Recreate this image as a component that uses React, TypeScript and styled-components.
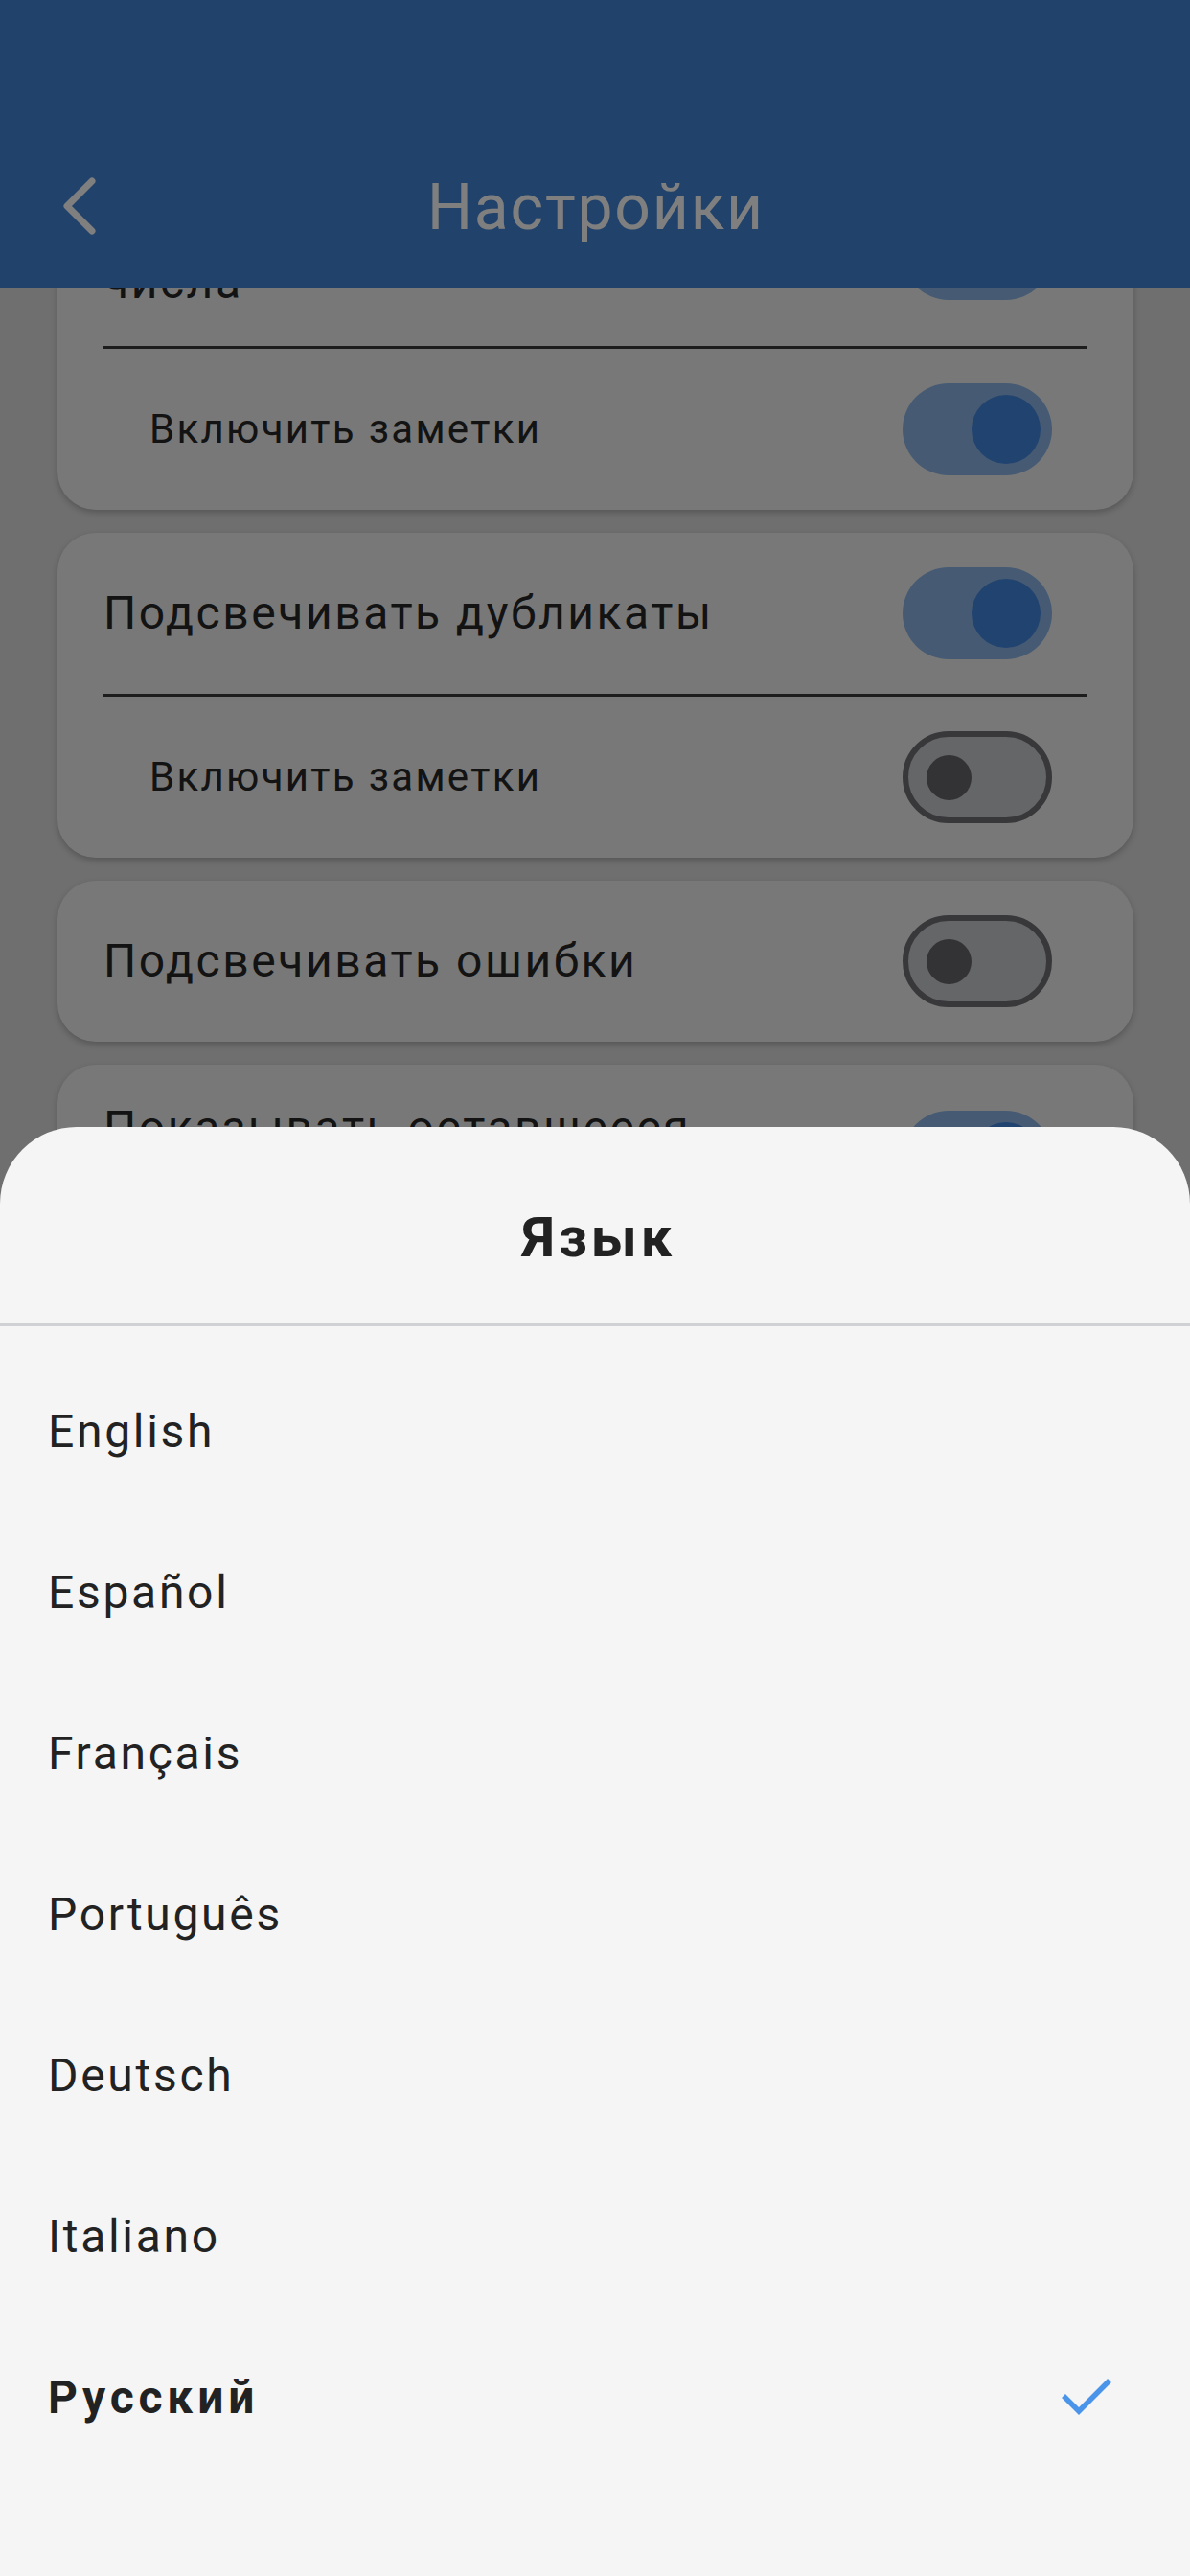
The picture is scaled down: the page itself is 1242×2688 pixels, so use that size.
import React from 'react';
import styled, { createGlobalStyle } from 'styled-components';

const GlobalStyle = createGlobalStyle`
  html, body {
    margin: 0;
    padding: 0;
    background: #dedede;
  }

  body {
    font-family: Roboto, 'Noto Sans', 'Liberation Sans', sans-serif;
    -webkit-font-smoothing: antialiased;
  }
`;

const Screen = styled.div`
  position: relative;
  width: 1242px;
  height: 2688px;
  overflow: hidden;
  background: #dedede;
  display: flex;
  flex-direction: column;
`;

const Header = styled.header`
  position: relative;
  z-index: 1;
  flex: 0 0 300px;
  box-sizing: border-box;
  padding-top: 150px;
  background: #4284d4;
`;

const Bar = styled.div`
  height: 132px;
  display: grid;
  grid-template-columns: 1fr auto 1fr;
  align-items: center;
`;

const BackButton = styled.button`
  justify-self: start;
  margin-left: 62px;
  padding: 0;
  border: none;
  background: none;
  display: flex;
  align-items: center;
`;

const Title = styled.h1`
  margin: 0;
  padding-left: 2px;
  font-size: 66px;
  font-weight: 400;
  color: #ffffff;
  letter-spacing: 1.8px;
`;

const Scroller = styled.main`
  flex: 1;
  overflow: hidden;
`;

const SettingsList = styled.div`
  display: flex;
  flex-direction: column;
  gap: 24px;
  padding: 0 59px 0 60px;
`;

const Card = styled.section`
  border-radius: 40px;
  background: #f0f0f0;
  padding: 0 49px 0 48px;
  box-shadow: 0 3px 6px rgba(0, 0, 0, 0.22);
`;

const Row = styled.div<{ $indent?: boolean }>`
  display: flex;
  align-items: center;
  justify-content: space-between;
  gap: 24px;
  min-height: 96px;
  padding: 36px 36px 36px ${(p) => (p.$indent ? '48px' : '0')};
`;

const Label = styled.span<{ $small?: boolean }>`
  font-size: ${(p) => (p.$small ? '42px' : '48px')};
  letter-spacing: ${(p) => (p.$small ? '2.3px' : '2.55px')};
  line-height: 60px;
  color: #262626;
  white-space: pre-line;
`;

const Divider = styled.div`
  height: 3px;
  background: #3a3a3a;
`;

const Track = styled.div<{ $on: boolean }>`
  flex: 0 0 auto;
  box-sizing: border-box;
  width: 156px;
  height: 96px;
  border-radius: 48px;
  display: flex;
  align-items: center;
  background: ${(p) => (p.$on ? '#8cb6e6' : '#cacccf')};
  border: ${(p) => (p.$on ? 'none' : '6px solid #707076')};
  justify-content: ${(p) => (p.$on ? 'flex-end' : 'flex-start')};
  padding: ${(p) => (p.$on ? '0 12px' : '0 18.5px')};
`;

const Thumb = styled.div<{ $on: boolean }>`
  width: ${(p) => (p.$on ? '72px' : '47px')};
  height: ${(p) => (p.$on ? '72px' : '47px')};
  border-radius: 50%;
  background: ${(p) => (p.$on ? '#4286e0' : '#66666c')};
`;

const Scrim = styled.div`
  position: absolute;
  inset: 0;
  z-index: 2;
  background: rgba(0, 0, 0, 0.5);
`;

const Sheet = styled.div`
  position: absolute;
  z-index: 3;
  left: 0;
  right: 0;
  bottom: 0;
  top: 1176px;
  background: #f5f5f5;
  border-radius: 80px 80px 0 0;
  display: flex;
  flex-direction: column;
`;

const SheetHeader = styled.div`
  height: 208px;
  box-sizing: border-box;
  padding-top: 24px;
  display: flex;
  align-items: center;
  justify-content: center;
  border-bottom: 3px solid #d0d1d5;
`;

const SheetTitle = styled.h2`
  margin: 0;
  padding-left: 8px;
  font-size: 58px;
  font-weight: 700;
  letter-spacing: 4px;
  color: #222222;
`;

const Options = styled.ul`
  list-style: none;
  margin: 0;
  padding: 25px 0 0;
`;

const Option = styled.li<{ $selected?: boolean }>`
  height: 168px;
  display: flex;
  align-items: center;
  justify-content: space-between;
  padding: 0 80px 0 50px;
  font-size: 48px;
  letter-spacing: ${(p) => (p.$selected ? '4.8px' : '2.7px')};
  font-weight: ${(p) => (p.$selected ? 700 : 400)};
  color: #222222;
`;

type Setting = { label: string; on: boolean; sub?: boolean };

const cards: Setting[][] = [
  [
    { label: 'Подсвечивать одинаковые\nчисла', on: true },
    { label: 'Включить заметки', on: true, sub: true },
  ],
  [
    { label: 'Подсвечивать дубликаты', on: true },
    { label: 'Включить заметки', on: false, sub: true },
  ],
  [{ label: 'Подсвечивать ошибки', on: false }],
  [{ label: 'Показывать оставшееся\nколичество', on: true }],
  [{ label: 'Таймер', on: true }],
];

const languages = ['English', 'Español', 'Français', 'Português', 'Deutsch', 'Italiano', 'Русский'];
const current = 'Русский';

const Toggle = ({ on }: { on: boolean }) => (
  <Track $on={on}>
    <Thumb $on={on} />
  </Track>
);

const ChevronLeft = () => (
  <svg width="40" height="64" viewBox="0 0 40 64">
    <polyline
      points="34,5 8,31 34,57"
      fill="none"
      stroke="#ffffff"
      strokeWidth="7"
      strokeLinecap="round"
      strokeLinejoin="round"
    />
  </svg>
);

const Check = () => (
  <svg width="56" height="44" viewBox="0 0 56 44">
    <polyline points="4,21 20,37 52,5" fill="none" stroke="#4a94ea" strokeWidth="5.5" />
  </svg>
);

const App = () => {
  return (
    <Screen>
      <GlobalStyle />
      <Header>
        <Bar>
          <BackButton aria-label="Назад">
            <ChevronLeft />
          </BackButton>
          <Title>Настройки</Title>
        </Bar>
      </Header>

      <Scroller>
        {/* list is scrolled down a bit, the first card sits under the header */}
        <SettingsList style={{ transform: 'translateY(-131px)' }}>
          {cards.map((rows, i) => (
            <Card key={i}>
              {rows.map((row, j) => (
                <React.Fragment key={j}>
                  {j > 0 && <Divider />}
                  <Row $indent={row.sub}>
                    <Label $small={row.sub}>{row.label}</Label>
                    <Toggle on={row.on} />
                  </Row>
                </React.Fragment>
              ))}
            </Card>
          ))}
        </SettingsList>
      </Scroller>

      <Scrim />

      <Sheet>
        <SheetHeader>
          <SheetTitle>Язык</SheetTitle>
        </SheetHeader>
        <Options>
          {languages.map((lang) => (
            <Option key={lang} $selected={lang === current}>
              <span>{lang}</span>
              {lang === current && <Check />}
            </Option>
          ))}
        </Options>
      </Sheet>
    </Screen>
  );
};

export default App;
